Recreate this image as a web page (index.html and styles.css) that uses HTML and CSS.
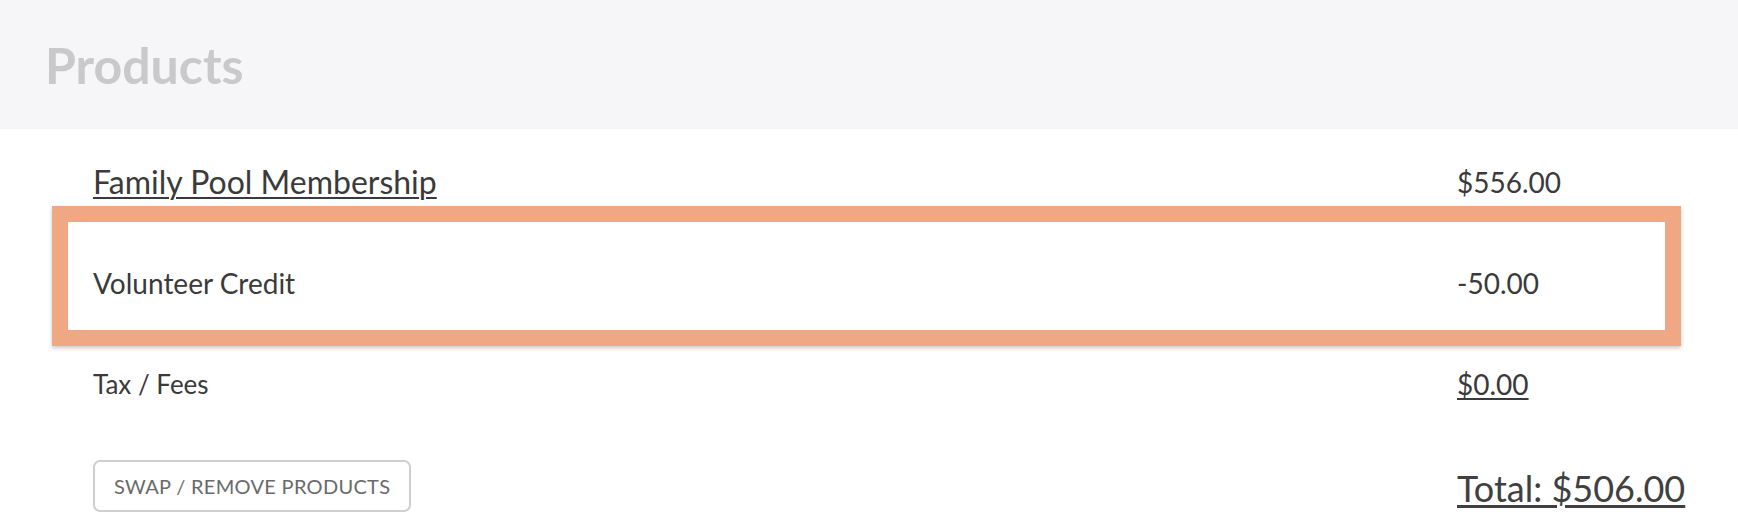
FILE: index.html
```html
<!DOCTYPE html>
<html lang="en">
<head>
<meta charset="utf-8">
<title>Products</title>
<link rel="stylesheet" href="styles.css">
</head>
<body>
<header class="panel-header">
  <h1 class="panel-title">Products</h1>
</header>
<section class="rows">
  <div class="row row--first">
    <a class="row-label link link--product" href="#">Family Pool Membership</a>
    <span class="row-amount">$556.00</span>
  </div>
  <div class="row row--highlight">
    <span class="row-label">Volunteer Credit</span>
    <span class="row-amount">-50.00</span>
  </div>
  <div class="row row--tax">
    <span class="row-label label--tax">Tax / Fees</span>
    <a class="row-amount link" href="#">$0.00</a>
  </div>
  <div class="row row--footer">
    <div class="row-label"><button class="btn-swap" type="button">Swap / Remove Products</button></div>
    <a class="row-amount total link" href="#">Total: $506.00</a>
  </div>
</section>
</body>
</html>
```

FILE: styles.css
```css
* { box-sizing: border-box; }

html, body {
  margin: 0;
  padding: 0;
  background: #ffffff;
  font-family: Lato, "Liberation Sans", sans-serif;
  color: #3a3a3a;
}

.panel-header {
  height: 129px;
  background: #f6f6f8;
  padding: 0 0 0 45px;
  display: flex;
  align-items: center;
}

.panel-title {
  margin: 0;
  font-size: 50px;
  font-weight: 700;
  color: #c9c9cb;
  line-height: 1;
}

.rows {
  margin: 0 57px 0 52px;
}

.row {
  display: grid;
  grid-template-columns: 1fr 224px;
  align-items: center;
  padding-left: 41px;
  font-size: 28px;
  line-height: 34px;
}

.row-amount { white-space: nowrap; }

.link {
  color: #3a3a3a;
  text-decoration: underline;
  text-decoration-thickness: 2px;
  text-underline-offset: 3px;
}

.link--product {
  font-size: 32px;
  justify-self: start;
}

.label--tax {
  font-size: 26px;
}

.row--first {
  padding-top: 36px;
  padding-bottom: 7px;
}

.row--highlight {
  border: 16px solid #f0a783;
  padding: 44px 0 30px 25px;
  grid-template-columns: 1fr 208px;
  box-shadow: 0 2px 4px rgba(0, 0, 0, 0.22);
}

.row--tax {
  padding-top: 21px;
}

.row--footer {
  padding-top: 59px;
  align-items: end;
}

.total {
  font-size: 36px;
  line-height: 42px;
  margin-bottom: 3px;
  text-decoration-thickness: 3px;
  color: #404040;
}

.btn-swap {
  display: inline-block;
  height: 52px;
  padding: 0 19px;
  border: 2px solid #cfcfcf;
  border-radius: 7px;
  background: #ffffff;
  font-family: Lato, "Liberation Sans", sans-serif;
  font-size: 20px;
  text-transform: uppercase;
  color: #6a6a6a;
  letter-spacing: 0.3px;
  cursor: pointer;
}
```
